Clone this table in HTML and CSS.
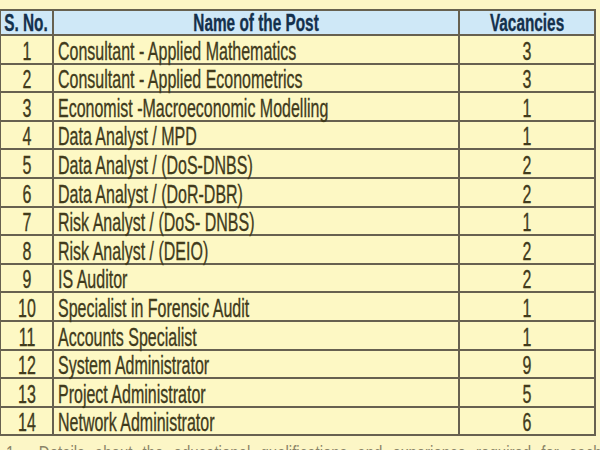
FILE: index.html
```html
<!DOCTYPE html>
<html>
<head>
<meta charset="utf-8">
<link rel="stylesheet" href="styles.css">
</head>
<body>
<div class="page">
<table class="posts">
<colgroup><col class="c-no"><col class="c-name"><col class="c-vac"></colgroup>
<thead>
<tr><th><span class="t">S. No.</span></th><th><span class="t">Name of the Post</span></th><th><span class="t">Vacancies</span></th></tr>
</thead>
<tbody>
<tr><td class="no"><span class="t">1</span></td><td class="name"><span class="t">Consultant - Applied Mathematics</span></td><td class="vac"><span class="t">3</span></td></tr>
<tr><td class="no"><span class="t">2</span></td><td class="name"><span class="t">Consultant - Applied Econometrics</span></td><td class="vac"><span class="t">3</span></td></tr>
<tr><td class="no"><span class="t">3</span></td><td class="name"><span class="t">Economist -Macroeconomic Modelling</span></td><td class="vac"><span class="t">1</span></td></tr>
<tr><td class="no"><span class="t">4</span></td><td class="name"><span class="t">Data Analyst / MPD</span></td><td class="vac"><span class="t">1</span></td></tr>
<tr><td class="no"><span class="t">5</span></td><td class="name"><span class="t">Data Analyst / (DoS-DNBS)</span></td><td class="vac"><span class="t">2</span></td></tr>
<tr><td class="no"><span class="t">6</span></td><td class="name"><span class="t">Data Analyst / (DoR-DBR)</span></td><td class="vac"><span class="t">2</span></td></tr>
<tr><td class="no"><span class="t">7</span></td><td class="name"><span class="t">Risk Analyst / (DoS- DNBS)</span></td><td class="vac"><span class="t">1</span></td></tr>
<tr><td class="no"><span class="t">8</span></td><td class="name"><span class="t">Risk Analyst / (DEIO)</span></td><td class="vac"><span class="t">2</span></td></tr>
<tr><td class="no"><span class="t">9</span></td><td class="name"><span class="t">IS Auditor</span></td><td class="vac"><span class="t">2</span></td></tr>
<tr><td class="no"><span class="t">10</span></td><td class="name"><span class="t">Specialist in Forensic Audit</span></td><td class="vac"><span class="t">1</span></td></tr>
<tr><td class="no"><span class="t">11</span></td><td class="name"><span class="t">Accounts Specialist</span></td><td class="vac"><span class="t">1</span></td></tr>
<tr><td class="no"><span class="t">12</span></td><td class="name"><span class="t">System Administrator</span></td><td class="vac"><span class="t">9</span></td></tr>
<tr><td class="no"><span class="t">13</span></td><td class="name"><span class="t">Project Administrator</span></td><td class="vac"><span class="t">5</span></td></tr>
<tr><td class="no"><span class="t">14</span></td><td class="name"><span class="t">Network Administrator</span></td><td class="vac"><span class="t">6</span></td></tr>
</tbody>
</table>
<p class="note"><span class="nt">1.&nbsp;&nbsp;Details about the educational qualifications and experience required for each post are given</span></p>
</div>
</body>
</html>
```
FILE: styles.css
```css
html, body {
  margin: 0;
  padding: 0;
  background: #fcf6c6;
  overflow: hidden;
}
.page {
  width: 600px;
  height: 450px;
  overflow: hidden;
  padding-top: 9px;
  box-sizing: border-box;
}
.posts {
  border-collapse: collapse;
  table-layout: fixed;
  width: 595px;
  margin-left: -1px;
  font-family: "Liberation Sans", Arial, sans-serif;
  font-size: 25px;
  color: #413b1c;
}
.c-no { width: 53px; }
.c-name { width: 406px; }
.c-vac { width: 136px; }
.posts th, .posts td {
  border: 2px solid #676150;
  padding: 0 3px;
  line-height: 22px;
  white-space: nowrap;
  overflow: visible;
  vertical-align: bottom;
}
.posts .t {
  display: inline-block;
  transform: scaleX(0.64);
  transform-origin: center;
  margin: 0 -40px;
  -webkit-text-stroke: 0.35px currentColor;
}
.posts td.name .t {
  transform-origin: left center;
  margin: 0;
}
.posts th {
  background: #cfe8f7;
  color: #14304c;
  font-weight: bold;
  font-size: 24px;
  height: 23px;
  text-align: center;
}
.posts td {
  background: #fdf8c4;
  height: 25.6px;
  padding-bottom: 1px;
}
.posts td.no, .posts td.vac { text-align: center; }
.posts td.name { text-align: left; padding-left: 4px; }
.note {
  margin: 6px 0 0 6px;
  font-family: "Liberation Sans", Arial, sans-serif;
  font-size: 20px;
  color: #8a8468;
  white-space: nowrap;
}
.note .nt {
  display: inline-block;
  transform: scaleX(0.75);
  transform-origin: left center;
  word-spacing: 8px;
}
```
